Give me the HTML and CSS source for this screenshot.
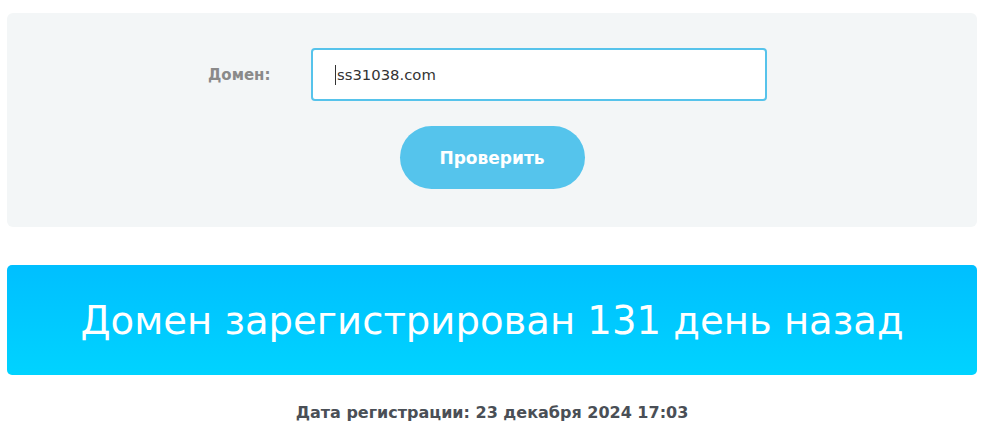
FILE: index.html
```html
<!DOCTYPE html>
<html lang="ru">
<head>
<meta charset="utf-8">
<title>Проверка домена</title>
<link rel="stylesheet" href="styles.css">
</head>
<body>
<div class="page">
  <form class="check-box">
    <div class="field-row">
      <label class="field-label" for="domain">Домен:</label>
      <div class="input"><span class="caret"></span>ss31038.com</div>
    </div>
    <div class="btn-row">
      <button type="button" class="btn">Проверить</button>
    </div>
  </form>
  <div class="result">Домен зарегистрирован 131 день назад</div>
  <div class="reg-date">Дата регистрации: 23 декабря 2024 17:03</div>
</div>
</body>
</html>
```
FILE: styles.css
```css
html, body {
  margin: 0;
  padding: 0;
  background: #ffffff;
}
body {
  font-family: "DejaVu Sans", "Open Sans", sans-serif;
}
.page {
  margin: 13px 12px 0 7px;
}
.check-box {
  background: #f3f6f7;
  border-radius: 6px;
  height: 214px;
  box-sizing: border-box;
  padding-top: 35px;
  margin: 0;
}
.field-row {
  display: flex;
  align-items: center;
  padding-left: 201px;
}
.field-label {
  width: 103px;
  font-size: 15px;
  font-weight: bold;
  color: #8a8a8a;
}
.input {
  width: 456px;
  height: 53px;
  box-sizing: border-box;
  border: 2px solid #56c3eb;
  border-radius: 4px;
  background: #fff;
  display: flex;
  align-items: center;
  padding-left: 22px;
  font-size: 14.8px;
  color: #333;
}
.caret {
  display: inline-block;
  width: 1px;
  height: 20px;
  background: #333;
  margin-right: 1px;
}
.btn-row {
  display: flex;
  justify-content: center;
  margin-top: 25px;
}
.btn {
  width: 185px;
  height: 63px;
  border: none;
  border-radius: 32px;
  background: #55c4ec;
  color: #fff;
  font-family: "DejaVu Sans", sans-serif;
  font-size: 17px;
  font-weight: bold;
}
.result {
  margin-top: 38px;
  height: 110px;
  border-radius: 5px;
  background: linear-gradient(180deg, #00bfff 0%, #00d3ff 100%);
  color: #fff;
  display: flex;
  align-items: center;
  justify-content: center;
  font-size: 38.6px;
  font-weight: normal;
}
.reg-date {
  text-align: center;
  margin-top: 28px;
  font-size: 16px;
  font-weight: bold;
  color: #4a4f56;
}
```
